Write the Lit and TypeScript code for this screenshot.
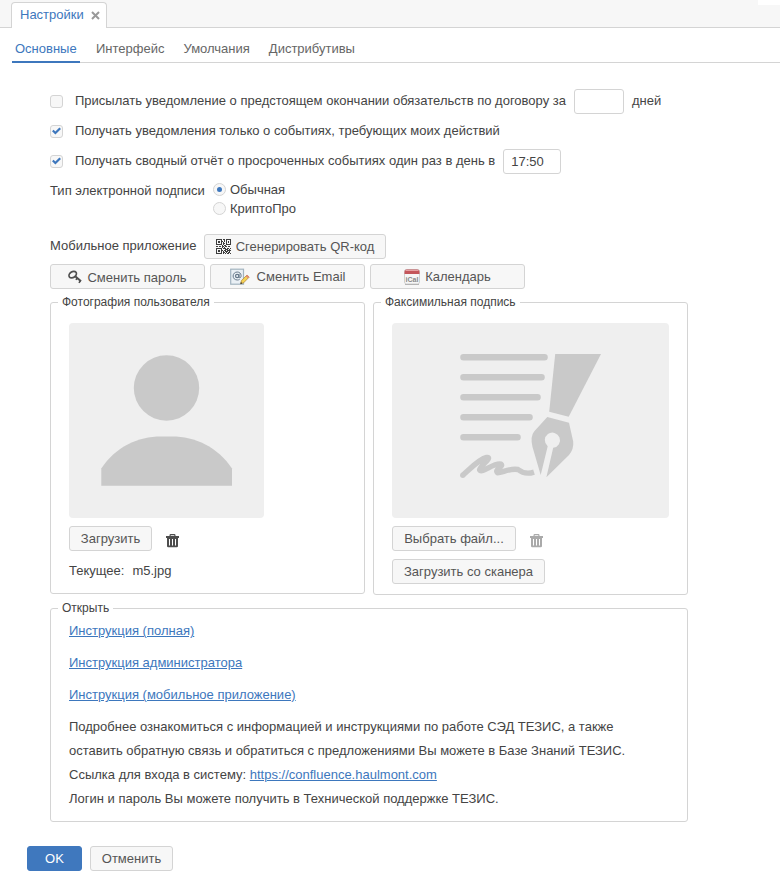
import { LitElement, html, css, svg } from "lit";
import { customElement, state } from "lit/decorators.js";

// bitmap of the QR button glyph, one string per pixel row
const QR = [
  "111111011011111",
  "100001001010001",
  "101101101010101",
  "101101010010101",
  "100001011010001",
  "111111010011111",
  "000000101100000",
  "110110110110110",
  "000000101000000",
  "111111011101101",
  "100001000111010",
  "101101101101111",
  "101101010111010",
  "100001011010110",
  "111111010101101",
];

const qrIcon = html`<svg width="15" height="15" viewBox="0 0 15 15" shape-rendering="crispEdges">
  ${QR.map((row, y) =>
    [...row].map((c, x) => (c === "1" ? svg`<rect x=${x} y=${y} width="1" height="1" fill="#3c3c3c" />` : null))
  )}
</svg>`;

const keyIcon = html`<svg width="14" height="14" viewBox="0 0 14 14" fill="none" stroke="#505050">
  <ellipse cx="4.7" cy="4.600" rx="4" ry="2.900" transform="rotate(-35 4.7 4.6)" stroke-width="1.700" />
  <path d="M7.200 6.200 13 11.200" stroke-width="2" />
  <path d="M9.200 8 8 9.900M12.600 10.400 11 12.900" stroke-width="1.700" />
</svg>`;

const mailIcon = html`<svg width="20" height="18" viewBox="0 0 20 18">
  <rect x=".7" y="1.200" width="12.800" height="15" fill="#eaf0f5" stroke="#a3b4c0" stroke-width="1.200" />
  <circle cx="7.200" cy="8" r="1.700" fill="none" stroke="#66788a" stroke-width="1.200" />
  <path d="M9 6v3c0 1.300 2.100 1.200 2.100-1.200S9.300 4 7.200 4 3.100 5.700 3.100 8s1.800 4 4.200 4c.9 0 1.700-.2 2.300-.6" fill="none" stroke="#66788a" stroke-width="1" />
  <path d="m10.600 15.800.9-3.200 5.500-5.600 2.200 2.100-5.600 5.700z" fill="#f6d355" stroke="#b58a3a" stroke-width=".8" />
  <path d="m15.700 8.200 1.300-1.400 2.200 2.100-1.300 1.400z" fill="#e08a78" />
  <path d="m10.300 16.100.7-2.100 1.400 1.400z" fill="#333" />
</svg>`;

const calIcon = html`<svg width="16" height="16" viewBox="0 0 16 16">
  <rect x=".5" y=".5" width="15" height="14.500" rx="2" fill="#f6f6f6" stroke="#d0d0d0" />
  <path d="M.5 5V2.500a2 2 0 0 1 2-2h11a2 2 0 0 1 2 2V5z" fill="#c4565b" />
  <path d="M1.500 1.500h13" stroke="#e6a0a2" stroke-width="1" />
  <path d="M1 15.500h14" stroke="#b5b5b5" />
  <text x="8" y="12.600" text-anchor="middle" font-family="Liberation Sans, sans-serif" font-size="7" font-weight="bold" fill="#888">iCal</text>
</svg>`;

const trashIcon = html`<svg width="13" height="14" viewBox="0 0 13 14" fill="currentColor">
  <path d="M0 2h3.500V1.200Q3.500 0 4.700 0h3.600q1.200 0 1.200 1.200V2H13v2H0zM4.700 1.200V2h3.600v-.8z" fill-rule="evenodd" />
  <path d="M1 4h11v8q0 1.300-1.300 1.300H2.300Q1 13.300 1 12zM3 5v6.500h1V5zM6 5v6.500h1V5zM9 5v6.500h1V5z" fill-rule="evenodd" />
</svg>`;

const check = html`<svg class="check" width="9" height="8" viewBox="0 0 9 8"><path d="M.8 3.500 3.400 6 8.200 1.200" fill="none" stroke="#3d77bd" stroke-width="2.200" /></svg>`;

const person = html`<svg width="195" height="195" viewBox="0 0 195 195" fill="#c9c9c9">
  <circle cx="97.500" cy="65" r="32.700" />
  <path d="M32.300 145.500C46 124 69 113.400 92 113.400h11c23 0 46 10.600 60 32.100v17.200H32.300z" />
</svg>`;

const signature = html`<svg width="277" height="195" viewBox="0 0 277 195" fill="#c9c9c9">
  <g stroke="#c9c9c9" stroke-width="6.600" stroke-linecap="round">
    <path d="M71.500 34.300h81M71.500 54.300h78M71.500 74.300h74M71.500 94.300h66M71.500 114.300h54" />
  </g>
  <path d="M163.200 31H209l-32.300 62.800-19.500-5.100z" />
  <path fill-rule="evenodd" d="M155.300 94 177 99.800l4.200 18.700q.8 7.500-4.200 13.500L154.400 154.300l6.800-29.500a7.600 7.600 0 1 0-5.500-1.600L148.700 152 140.500 124q-2.500-10.500 1.600-15.500z" />
  <path d="M71 152.500C77 147.500 87 136.500 94.500 135 101.500 134 88 143.500 87.600 147.300 90 151.500 102 139.500 109 141.500 112 144 102 147 105.500 150.200 110 150.500 117 145.500 126 147 131.500 151.500 137 151.200 142 149.600" fill="none" stroke="#c9c9c9" stroke-width="5.400" stroke-linejoin="round" transform="translate(0 -.5)" />
  <circle cx="70.800" cy="152.200" r="2.700" />
</svg>`;

@customElement("app-root")
export class AppRoot extends LitElement {
  @state() private tabs = ["Основные", "Интерфейс", "Умолчания", "Дистрибутивы"];

  static styles = css`
    :host { display: block; width: 780px; height: 886px; overflow: hidden; background: #fff; color: #444;
      font: 13px/16px "Liberation Sans", Arial, sans-serif; }
    * { box-sizing: border-box; }
    svg { display: block; flex: none; }
    .strip { display: flex; justify-content: space-between; height: 28px; padding-left: 11px; background: #f7f7f7; border-bottom: 1px solid #d4d4d4; }
    .corner { width: 22px; height: 5px; background: #fff; }
    .doc { width: 96px; height: 26px; margin-top: 2px; display: flex; align-items: center; gap: 7px; padding: 0 0 2px 8px; white-space: nowrap;
      background: #fff; border: 1px solid #d4d4d4; border-bottom: 0; border-radius: 4px 4px 0 0; color: #3d77bd; }
    .close { margin-top: 1px; }
    .subtabs { display: flex; height: 35px; margin-left: 12px; border-bottom: 1px solid #d4d4d4; gap: 19px; color: #666; }
    .sub { height: 35px; padding-top: 13px; white-space: nowrap; }
    .sub.on { width: 68px; padding-left: 3px; margin-right: -3px; color: #3d77bd; border-bottom: 2px solid #3d77bd; }
    .page { padding: 26px 0 0 50px; white-space: nowrap; }
    .row { display: flex; align-items: center; height: 25px; }
    .row + .row { margin-top: 5px; }
    .box { width: 13px; height: 13px; flex: none; margin-right: 12px; display: flex; align-items: center; justify-content: center;
      border: 1px solid #d4d4d4; border-radius: 3px; background: #f7f7f7; }
    .check { margin-bottom: 1px; }
    .lab { margin-top: -2px; }
    .field { height: 25px; margin-left: 8px; border: 1px solid #d4d4d4; border-radius: 3px; padding: 4px 7px; }
    .days { width: 50px; margin-right: 8px; }
    .time { width: 58px; }
    .types { display: flex; margin-top: 6px; height: 38px; }
    .typelab { width: 163px; padding-top: 3px; }
    .opt { display: flex; align-items: center; height: 19px; gap: 4px; }
    .radio { width: 13px; height: 13px; border: 1px solid #d4d4d4; border-radius: 50%; background: #f7f7f7; display: flex;
      align-items: center; justify-content: center; }
    .dot { width: 5px; height: 5px; border-radius: 50%; background: #3d77bd; }
    .mobile { display: flex; margin-top: 16px; }
    .moblab { width: 154px; padding-top: 4px; }
    .btn { height: 25px; display: inline-flex; align-items: center; justify-content: center; gap: 5px; border: 1px solid #d4d4d4;
      border-radius: 3px; background: #f7f7f7; color: #555; white-space: nowrap; flex: none; }
    .w182 { width: 182px; } .w155 { width: 155px; } .w83 { width: 83px; } .w124 { width: 124px; } .w153 { width: 153px; }
    .w55 { width: 55px; background: #3f78be; border-color: #3f78be; color: #fff; }
    .low { padding-top: 2px; }
    .wide { gap: 7px; }
    .trio { display: flex; gap: 5px; margin-top: 5px; }
    .panels { display: flex; gap: 8px; margin-top: 5px; align-items: flex-start; }
    fieldset { margin: 0; min-width: 0; border: 1px solid #d4d4d4; border-radius: 3px; padding: 0 0 0 18px; }
    legend { margin-left: -11px; padding: 0 4px; font-size: 12px; height: 16px; line-height: 16px; }
    .photo { width: 315px; height: 300px; }
    .fax { width: 315px; height: 301px; }
    .pic { margin-top: 13px; background: #efefef; border-radius: 4px; height: 195px; }
    .p1 { width: 195px; } .p2 { width: 277px; }
    .acts { display: flex; gap: 14px; margin-top: 8px; }
    .trash { padding-top: 8px; color: #4d4d4d; }
    .trash.off { color: #aaa; }
    .cur { display: flex; gap: 8px; margin-top: 12px; }
    .scan { margin-top: 8px; }
    .open { width: 638px; height: 222px; margin-top: 5px; }
    a { color: #3d77bd; text-decoration: underline; }
    .link { height: 32px; padding-top: 7px; }
    .para { line-height: 24px; padding-top: 3px; }
    .foot { display: flex; gap: 8px; margin: 24px 0 0 -23px; }
  `;

  private box(on: boolean) {
    return html`<span class="box">${on ? check : null}</span>`;
  }

  render() {
    return html`
      <div class="strip"><div class="doc"><span>Настройки</span>
        <svg class="close" width="9" height="9" viewBox="0 0 9 9"><path d="m1 1 7 7M8 1 1 8" stroke="#999" stroke-width="2" /></svg></div>
        <div class="corner"></div></div>
      <div class="subtabs">${this.tabs.map((t, i) => html`<div class="sub ${i ? "" : "on"}"><span>${t}</span></div>`)}</div>
      <div class="page">
        <div class="row">${this.box(false)}<span class="lab">Присылать уведомление о предстоящем окончании обязательств по договору за</span>
          <div class="field days"></div><span class="lab">дней</span></div>
        <div class="row">${this.box(true)}<span class="lab">Получать уведомления только о событиях, требующих моих действий</span></div>
        <div class="row">${this.box(true)}<span class="lab">Получать сводный отчёт о просроченных событиях один раз в день в</span>
          <div class="field time">17:50</div></div>
        <div class="types"><span class="typelab">Тип электронной подписи</span>
          <div>
            <div class="opt"><span class="radio"><span class="dot"></span></span>Обычная</div>
            <div class="opt"><span class="radio"></span>КриптоПро</div>
          </div></div>
        <div class="mobile"><span class="moblab">Мобильное приложение</span><div class="btn w182">${qrIcon}<span>Сгенерировать QR-код</span></div></div>
        <div class="trio">
          <div class="btn w155">${keyIcon}<span class="low">Сменить пароль</span></div>
          <div class="btn w155 wide">${mailIcon}<span>Сменить Email</span></div>
          <div class="btn w155">${calIcon}<span>Календарь</span></div>
        </div>
        <div class="panels">
          <fieldset class="photo"><legend>Фотография пользователя</legend>
            <div class="pic p1">${person}</div>
            <div class="acts"><div class="btn w83">Загрузить</div><div class="trash">${trashIcon}</div></div>
            <div class="cur"><span>Текущее:</span><span>m5.jpg</span></div>
          </fieldset>
          <fieldset class="fax"><legend>Факсимильная подпись</legend>
            <div class="pic p2">${signature}</div>
            <div class="acts"><div class="btn w124">Выбрать файл...</div><div class="trash off">${trashIcon}</div></div>
            <div class="btn w153 scan">Загрузить со сканера</div>
          </fieldset>
        </div>
        <fieldset class="open"><legend>Открыть</legend>
          <div class="link"><a>Инструкция (полная)</a></div>
          <div class="link"><a>Инструкция администратора</a></div>
          <div class="link"><a>Инструкция (мобильное приложение)</a></div>
          <div class="para">Подробнее ознакомиться с информацией и инструкциями по работе СЭД ТЕЗИС, а также<br />оставить обратную связь и обратиться с предложениями Вы можете в Базе Знаний ТЕЗИС.<br />Ссылка для входа в систему: <a>https://confluence.haulmont.com</a><br />Логин и пароль Вы можете получить в Технической поддержке ТЕЗИС.</div>
        </fieldset>
        <div class="foot"><div class="btn w55">OK</div><div class="btn w83">Отменить</div></div>
      </div>`;
  }
}
